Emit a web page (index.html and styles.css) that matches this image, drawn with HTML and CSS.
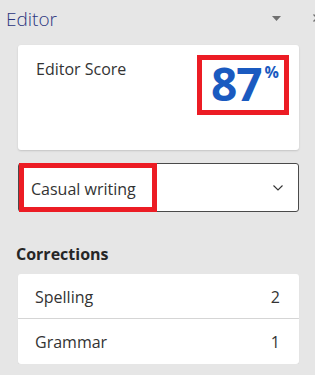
FILE: index.html
```html
<!DOCTYPE html>
<html lang="en">
<head>
    <meta charset="UTF-8">
    <meta name="viewport" content="width=device-width, initial-scale=1.0">
    <title>Editor</title>
    <link rel="stylesheet" href="styles.css">
</head>
<body>
    <header class="pane-header">
        <span class="pane-title">Editor</span>
        <svg class="pane-menu" width="9" height="5" viewBox="0 0 9 5"><path d="M0 0H9L4.5 5Z" fill="#707070"/></svg>
        <svg class="pane-close" width="8" height="8" viewBox="0 0 8 8"><path d="M0.5 0.5L7.5 7.5M7.5 0.5L0.5 7.5" stroke="#707070" stroke-width="1.3"/></svg>
    </header>

    <div class="score-card">
        <span class="score-label">Editor Score</span>
        <div class="score-box">
            <span class="score-num">87</span>
            <span class="score-pct">%</span>
        </div>
    </div>

    <div class="dropdown">
        <div class="dropdown-value">Casual writing</div>
        <svg class="chevron" width="10" height="6" viewBox="0 0 10 6"><path d="M0.5 0.5L5 5L9.5 0.5" fill="none" stroke="#333" stroke-width="1.1"/></svg>
    </div>

    <h2 class="section-title">Corrections</h2>
    <div class="list">
        <div class="row">
            <span>Spelling</span>
            <span>2</span>
        </div>
        <div class="row">
            <span>Grammar</span>
            <span>1</span>
        </div>
    </div>
</body>
</html>
```

FILE: styles.css
```css
body {
    margin: 0;
    padding: 0;
    background-color: #e6e6e6;
    font-family: "Open Sans", "Noto Sans", sans-serif;
    color: #333;
    overflow: hidden;
}
.pane-header {
    display: flex;
    align-items: flex-start;
    height: 45px;
    box-sizing: border-box;
    padding: 7px 0 0 6px;
}
.pane-title {
    font-size: 19px;
    font-weight: 300;
    line-height: 24px;
    color: #2b3580;
}
.pane-menu {
    margin-left: auto;
    margin-top: 9px;
}
.pane-close {
    margin-top: 7px;
    margin-left: 32px;
    margin-right: -6px;
}
.score-card {
    display: flex;
    justify-content: space-between;
    align-items: flex-start;
    margin: 0 16px 0 18px;
    height: 105px;
    box-sizing: border-box;
    padding: 10px 10px 0 18px;
    background-color: white;
    border-radius: 3px;
    box-shadow: 0 1px 2px rgba(0, 0, 0, 0.15);
}
.score-label {
    margin-top: 4px;
    font-size: 16px;
    line-height: 20px;
    color: #333;
}
.score-box {
    display: flex;
    align-items: flex-start;
    width: 92px;
    height: 60px;
    box-sizing: border-box;
    border: 5px solid #ec1c24;
    padding-left: 9px;
    color: #1a5ac0;
    font-weight: 700;
}
.score-num {
    font-size: 46px;
    line-height: 46px;
    letter-spacing: -1px;
}
.score-pct {
    font-size: 16px;
    line-height: 16px;
    margin-top: 4px;
    margin-left: 3px;
}
.dropdown {
    display: flex;
    align-items: center;
    margin: 13px 16px 0 18px;
    height: 49px;
    box-sizing: border-box;
    border: 1px solid #4a4a4a;
    border-radius: 3px;
    background-color: white;
}
.dropdown-value {
    display: flex;
    align-items: center;
    margin: -1px 0;
    width: 138px;
    height: 49px;
    box-sizing: border-box;
    border: 5px solid #ec1c24;
    padding: 2px 0 0 7px;
    font-size: 16px;
    line-height: 20px;
    color: #333;
}
.chevron {
    margin-left: auto;
    margin-right: 15px;
}
.section-title {
    margin: 32px 0 10px 0;
    padding-left: 16px;
    font-size: 16px;
    line-height: 20px;
    font-weight: 700;
    color: #262626;
}
.list {
    display: flex;
    flex-direction: column;
    gap: 1px;
    margin: 0 16px 0 18px;
}
.row {
    display: flex;
    justify-content: space-between;
    align-items: center;
    height: 44px;
    box-sizing: border-box;
    padding: 1px 19px 0 17px;
    background-color: white;
    font-size: 16px;
    line-height: 20px;
    color: #333;
    box-shadow: 0 1px 1px rgba(0, 0, 0, 0.08);
}
.row:first-child {
    border-radius: 3px 3px 0 0;
}
.row:last-child {
    height: 45px;
    border-radius: 0 0 3px 3px;
}
```
